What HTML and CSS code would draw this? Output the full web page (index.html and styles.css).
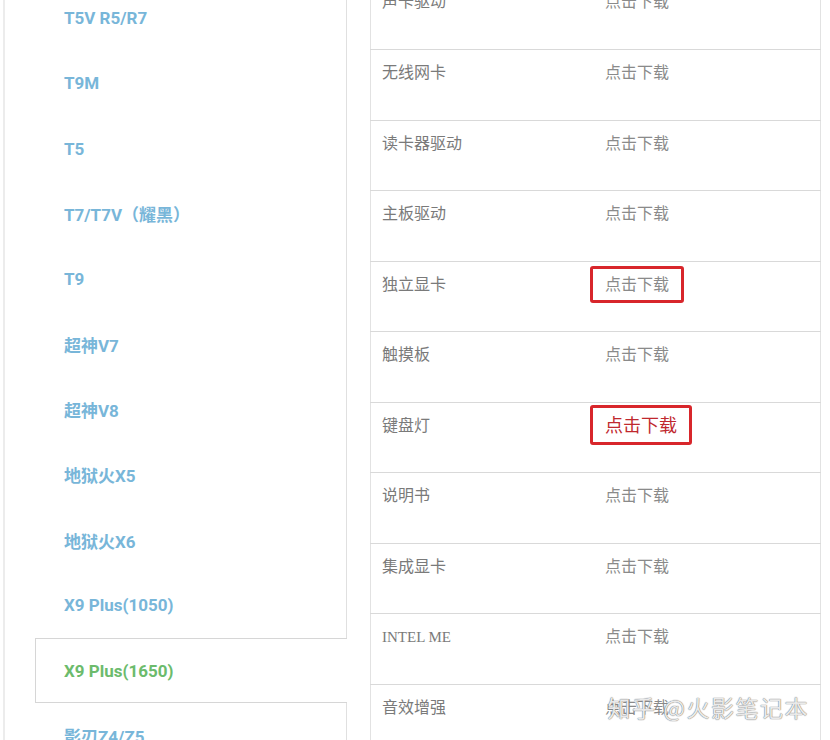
FILE: index.html
```html
<!DOCTYPE html>
<html lang="zh-CN">
<head>
    <meta charset="UTF-8">
    <meta name="viewport" content="width=device-width, initial-scale=1.0">
    <title>驱动下载</title>
    <link rel="stylesheet" href="styles.css">
</head>
<body>

<div class="page">
    <div class="models">
        <ul class="model-list">
            <li>T5V R5/R7</li>
            <li>T9M</li>
            <li>T5</li>
            <li>T7/T7V（耀黑）</li>
            <li>T9</li>
            <li>超神V7</li>
            <li>超神V8</li>
            <li>地狱火X5</li>
            <li>地狱火X6</li>
            <li>X9 Plus(1050)</li>
            <li class="active">X9 Plus(1650)</li>
            <li>影刃Z4/Z5</li>
        </ul>
    </div>

    <table class="drivers">
        <tbody>
        <tr><td>声卡驱动</td><td>点击下载</td></tr>
        <tr><td>无线网卡</td><td>点击下载</td></tr>
        <tr><td>读卡器驱动</td><td>点击下载</td></tr>
        <tr><td>主板驱动</td><td>点击下载</td></tr>
        <tr><td>独立显卡</td><td><span class="mark">点击下载</span></td></tr>
        <tr><td>触摸板</td><td>点击下载</td></tr>
        <tr><td>键盘灯</td><td><span class="mark big">点击下载</span></td></tr>
        <tr><td>说明书</td><td>点击下载</td></tr>
        <tr><td>集成显卡</td><td>点击下载</td></tr>
        <tr><td class="latin">INTEL ME</td><td>点击下载</td></tr>
        <tr><td>音效增强</td><td>点击下载</td></tr>
        </tbody>
    </table>
</div>

<div class="watermark">知乎 @火影笔记本</div>

</body>
</html>
```

FILE: styles.css
```css
body {
    margin: 0;
    padding-left: 3px;
    background-color: #fff;
    overflow: hidden;
    height: 740px;
    position: relative;
}

.page {
    display: flex;
    align-items: flex-start;
    margin-top: -21px;
}

/* Left column: model list */
.models {
    width: 341px;
    height: 800px;
    border-left: 2px solid #ececec;
    border-right: 1px solid #e0e0e0;
}

.model-list {
    list-style: none;
    margin: 6.4px 0 0 0;
    padding: 0;
}

.model-list li {
    height: 65.25px;
    box-sizing: border-box;
    display: flex;
    align-items: center;
    padding-left: 59px;
    font-family: Roboto, "Noto Sans CJK SC", sans-serif;
    font-weight: 700;
    font-size: 17px;
    color: #78b6d9;
}

.model-list li.active {
    margin-left: 30px;
    margin-right: -1px;
    padding-left: 28px;
    background-color: #fff;
    border: 1px solid #d6d6d6;
    border-right: none;
    color: #6cbb6c;
}

/* Right column: driver table */
.drivers {
    margin-left: 23px;
    width: 451px;
    border-collapse: collapse;
    border-left: 1px solid #e2e2e2;
    border-right: 1px solid #e2e2e2;
    font-family: "Liberation Serif", "Noto Sans CJK SC", serif;
    font-size: 16px;
    color: #7a7a7a;
}

.drivers tr {
    height: 70.5px;
    border-bottom: 1px solid #d9d9d9;
}

.drivers td {
    vertical-align: top;
    padding: 12px 0 0 11px;
    line-height: 22px;
}

.drivers td:first-child {
    width: 212px;
}

.drivers td:last-child {
    color: #8a8a8a;
}

.drivers .latin {
    font-size: 15px;
}

.mark {
    position: relative;
}

.mark::after {
    content: "";
    position: absolute;
    left: -15px;
    right: -15px;
    top: -10px;
    bottom: -10px;
    border: 3px solid #d8262b;
    border-radius: 3px;
}

.mark.big {
    font-size: 18px;
    color: #c0282e;
}

.mark.big::after {
    left: -15px;
    right: -15px;
    top: -11px;
    bottom: -9px;
}

.watermark {
    position: absolute;
    right: 21px;
    top: 690px;
    font-family: "Noto Sans CJK SC", sans-serif;
    font-size: 23px;
    letter-spacing: 1.5px;
    color: rgba(255, 255, 255, 0.85);
    text-shadow: 0 0 1px #777, 0 0 1px #777;
}
```
